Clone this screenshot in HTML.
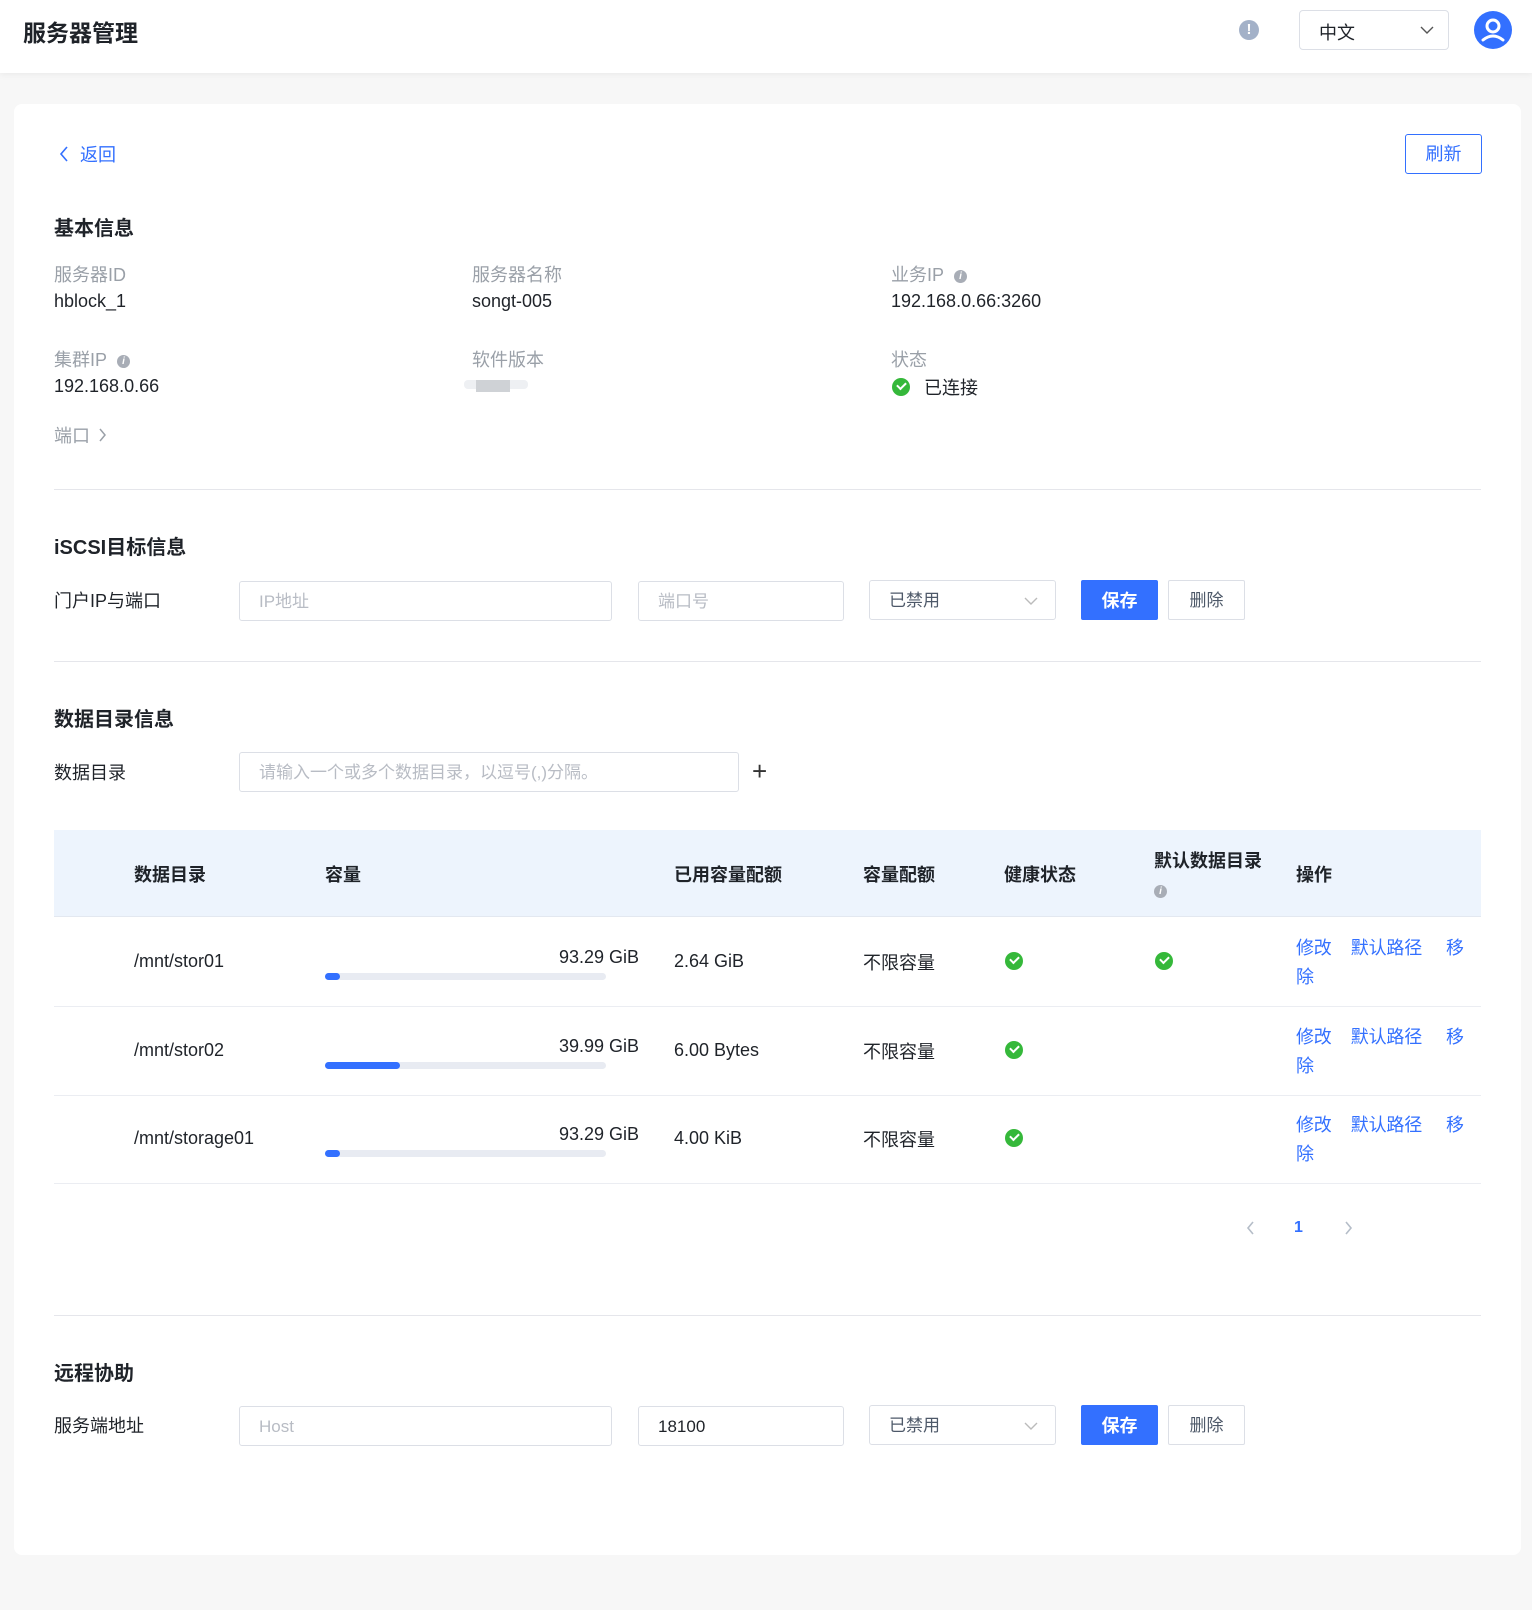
<!DOCTYPE html>
<html><head><meta charset="utf-8"><style>
*{margin:0;padding:0;box-sizing:border-box}
body{width:1532px;height:1610px;background:#f7f7f7;font-family:"Liberation Sans","Noto Sans CJK SC",sans-serif;color:#1f2329;font-size:18px;position:relative;overflow:hidden}
.a{position:absolute;white-space:nowrap}
.hdr{position:absolute;left:0;top:0;width:1532px;height:73px;background:#fff;box-shadow:0 2px 6px rgba(0,0,0,.05)}
.card{position:absolute;left:14px;top:104px;width:1507px;height:1451px;background:#fff;border-radius:8px}
.lbl{color:#9aa0a8}
.h2{font-weight:bold;font-size:20px;color:#1f2329}
.hr{position:absolute;left:54px;width:1427px;height:1px;background:#e5e6eb}
.inp{position:absolute;height:40px;border:1px solid #dcdfe6;border-radius:3px;background:#fff;font-size:17px;color:#b8bcc4;padding:0 19px;line-height:40px}
.btnp{position:absolute;height:40px;width:77px;background:#3370ff;color:#fff;border-radius:2px;font-weight:bold;text-align:center;line-height:42px;font-size:18px}
.btn{position:absolute;height:40px;width:77px;border:1px solid #dcdfe6;border-radius:2px;color:#4e5969;text-align:center;line-height:40px;font-size:17px}
.chk{position:absolute;width:18px;height:18px;border-radius:50%;background:#35b83a}
.chk:after{content:"";position:absolute;left:5px;top:4px;width:7px;height:4px;border-left:2px solid #fff;border-bottom:2px solid #fff;transform:rotate(-45deg)}
.info{display:inline-block;width:13px;height:13px;border-radius:50%;background:#a8adb6;color:#fff;font-size:10px;font-weight:bold;text-align:center;line-height:13px;font-style:italic;vertical-align:middle;margin-left:10px}
.bar{position:absolute;left:325px;width:281px;height:7px;border-radius:4px;background:#e8ebf2}
.bar i{position:absolute;left:0;top:0;height:7px;border-radius:4px;background:#3370ff}
.lk{color:#3370ff}
.row{position:absolute;left:54px;width:1427px;height:1px;background:#ebedf2}
</style></head><body>
<div class="hdr"></div>
<div class="a" style="left:23px;top:14px;font-size:23px;font-weight:bold">服务器管理</div>
<div class="a" style="left:1239px;top:20px;width:20px;height:20px;border-radius:50%;background:#a3b1c8;color:#fff;font-weight:bold;font-size:15px;text-align:center;line-height:20px">!</div>
<div class="a" style="left:1299px;top:10px;width:150px;height:40px;border:1px solid #dcdfe6;border-radius:4px;background:#fff"></div>
<div class="a" style="left:1319px;top:19px;font-size:18px">中文</div>
<svg class="a" style="left:1420px;top:25px" width="14" height="10"><path d="M1 2l6 6 6-6" fill="none" stroke="#555" stroke-width="1.4"/></svg>
<svg class="a" style="left:1474px;top:11px" width="38" height="38"><circle cx="19" cy="19" r="19" fill="#3370ff"/><circle cx="19" cy="15" r="6" fill="none" stroke="#fff" stroke-width="3"/><path d="M9 29q10-8 20 0" fill="none" stroke="#fff" stroke-width="3" stroke-linecap="round"/></svg>
<div class="card"></div>
<svg class="a" style="left:58px;top:145px" width="12" height="18"><path d="M9 2L3 9l6 7" fill="none" stroke="#3370ff" stroke-width="1.6"/></svg>
<div class="a lk" style="left:80px;top:141px">返回</div>
<div class="a" style="left:1405px;top:134px;width:77px;height:40px;border:1px solid #3370ff;border-radius:3px;color:#3370ff;text-align:center;line-height:38px">刷新</div>
<div class="a h2" style="left:54px;top:212px">基本信息</div>
<div class="a lbl" style="left:54px;top:261px">服务器ID</div>
<div class="a" style="left:54px;top:291px">hblock_1</div>
<div class="a lbl" style="left:472px;top:261px">服务器名称</div>
<div class="a" style="left:472px;top:291px">songt-005</div>
<div class="a lbl" style="left:891px;top:261px">业务IP<span class="info">i</span></div>
<div class="a" style="left:891px;top:291px">192.168.0.66:3260</div>
<div class="a lbl" style="left:54px;top:346px">集群IP<span class="info">i</span></div>
<div class="a" style="left:54px;top:376px">192.168.0.66</div>
<div class="a lbl" style="left:472px;top:346px">软件版本</div>
<div class="a" style="left:464px;top:380px;width:64px;height:9px;background:#eef0f3;border-radius:4px"></div>
<div class="a" style="left:476px;top:380px;width:34px;height:12px;background:#cfd2d6"></div>
<div class="a lbl" style="left:891px;top:346px">状态</div>
<div class="chk" style="left:892px;top:378px"></div>
<div class="a" style="left:924px;top:374px">已连接</div>
<div class="a lbl" style="left:54px;top:422px">端口</div>
<svg class="a" style="left:97px;top:428px" width="10" height="14"><path d="M3 1l5 6-5 6" fill="none" stroke="#9aa0a8" stroke-width="1.5"/></svg>
<div class="hr" style="top:489px"></div>
<div class="a h2" style="left:54px;top:531px">iSCSI目标信息</div>
<div class="a" style="left:54px;top:587px">门户IP与端口</div>
<div class="inp" style="left:239px;top:581px;width:373px">IP地址</div>
<div class="inp" style="left:638px;top:581px;width:206px">端口号</div>
<div class="inp" style="left:869px;top:580px;width:187px;color:#4e5969">已禁用</div>
<svg class="a" style="left:1024px;top:596px" width="14" height="10"><path d="M1 2l6 6 6-6" fill="none" stroke="#bbb" stroke-width="1.4"/></svg>
<div class="btnp" style="left:1081px;top:580px">保存</div>
<div class="btn" style="left:1168px;top:580px">删除</div>
<div class="hr" style="top:661px"></div>
<div class="a h2" style="left:54px;top:703px">数据目录信息</div>
<div class="a" style="left:54px;top:759px">数据目录</div>
<div class="inp" style="left:239px;top:752px;width:500px">请输入一个或多个数据目录，以逗号(,)分隔。</div>
<div class="a" style="left:752px;top:756px;font-size:26px;font-weight:300;color:#333">+</div>
<div class="a" style="left:54px;top:830px;width:1427px;height:87px;background:#edf4fd;border-bottom:1px solid #e3e8f0"></div>
<div class="a" style="left:134px;top:861px;font-weight:bold">数据目录</div>
<div class="a" style="left:325px;top:861px;font-weight:bold">容量</div>
<div class="a" style="left:674px;top:861px;font-weight:bold">已用容量配额</div>
<div class="a" style="left:863px;top:861px;font-weight:bold">容量配额</div>
<div class="a" style="left:1004px;top:861px;font-weight:bold">健康状态</div>
<div class="a" style="left:1154px;top:847px;font-weight:bold">默认数据目录</div>
<div class="a" style="left:1154px;top:880px"><span class="info" style="margin:0">i</span></div>
<div class="a" style="left:1296px;top:861px;font-weight:bold">操作</div>

<div class="a" style="left:134px;top:951px">/mnt/stor01</div>
<div class="a" style="left:559px;top:947px;width:78px;text-align:right">93.29 GiB</div>
<div class="bar" style="top:973px"><i style="width:15px"></i></div>
<div class="a" style="left:674px;top:951px">2.64 GiB</div>
<div class="a" style="left:863px;top:949px">不限容量</div>
<div class="chk" style="left:1005px;top:952px"></div>
<div class="chk" style="left:1155px;top:952px"></div>
<div class="a lk" style="left:1296px;top:934px;letter-spacing:-0.2px">修改&nbsp;&nbsp;&nbsp;&nbsp;默认路径&nbsp;&nbsp;&nbsp;&nbsp;&nbsp;移</div>
<div class="a lk" style="left:1296px;top:963px">除</div>
<div class="row" style="top:1006px"></div>

<div class="a" style="left:134px;top:1040px">/mnt/stor02</div>
<div class="a" style="left:559px;top:1036px;width:78px;text-align:right">39.99 GiB</div>
<div class="bar" style="top:1062px"><i style="width:75px"></i></div>
<div class="a" style="left:674px;top:1040px">6.00 Bytes</div>
<div class="a" style="left:863px;top:1038px">不限容量</div>
<div class="chk" style="left:1005px;top:1041px"></div>
<div class="a lk" style="left:1296px;top:1023px;letter-spacing:-0.2px">修改&nbsp;&nbsp;&nbsp;&nbsp;默认路径&nbsp;&nbsp;&nbsp;&nbsp;&nbsp;移</div>
<div class="a lk" style="left:1296px;top:1052px">除</div>
<div class="row" style="top:1095px"></div>

<div class="a" style="left:134px;top:1128px">/mnt/storage01</div>
<div class="a" style="left:559px;top:1124px;width:78px;text-align:right">93.29 GiB</div>
<div class="bar" style="top:1150px"><i style="width:15px"></i></div>
<div class="a" style="left:674px;top:1128px">4.00 KiB</div>
<div class="a" style="left:863px;top:1126px">不限容量</div>
<div class="chk" style="left:1005px;top:1129px"></div>
<div class="a lk" style="left:1296px;top:1111px;letter-spacing:-0.2px">修改&nbsp;&nbsp;&nbsp;&nbsp;默认路径&nbsp;&nbsp;&nbsp;&nbsp;&nbsp;移</div>
<div class="a lk" style="left:1296px;top:1140px">除</div>
<div class="row" style="top:1183px"></div>

<svg class="a" style="left:1246px;top:1221px" width="10" height="14"><path d="M7 1L2 7l5 6" fill="none" stroke="#b5bdc8" stroke-width="1.6"/></svg>
<div class="a" style="left:1294px;top:1219px;color:#3370ff;font-weight:bold;font-size:16px">1</div>
<svg class="a" style="left:1343px;top:1221px" width="10" height="14"><path d="M3 1l5 6-5 6" fill="none" stroke="#b5bdc8" stroke-width="1.6"/></svg>
<div class="hr" style="top:1315px"></div>
<div class="a h2" style="left:54px;top:1357px">远程协助</div>
<div class="a" style="left:54px;top:1412px">服务端地址</div>
<div class="inp" style="left:239px;top:1406px;width:373px">Host</div>
<div class="inp" style="left:638px;top:1406px;width:206px;color:#1f2329">18100</div>
<div class="inp" style="left:869px;top:1405px;width:187px;color:#4e5969">已禁用</div>
<svg class="a" style="left:1024px;top:1421px" width="14" height="10"><path d="M1 2l6 6 6-6" fill="none" stroke="#bbb" stroke-width="1.4"/></svg>
<div class="btnp" style="left:1081px;top:1405px">保存</div>
<div class="btn" style="left:1168px;top:1405px">删除</div>
</body></html>
